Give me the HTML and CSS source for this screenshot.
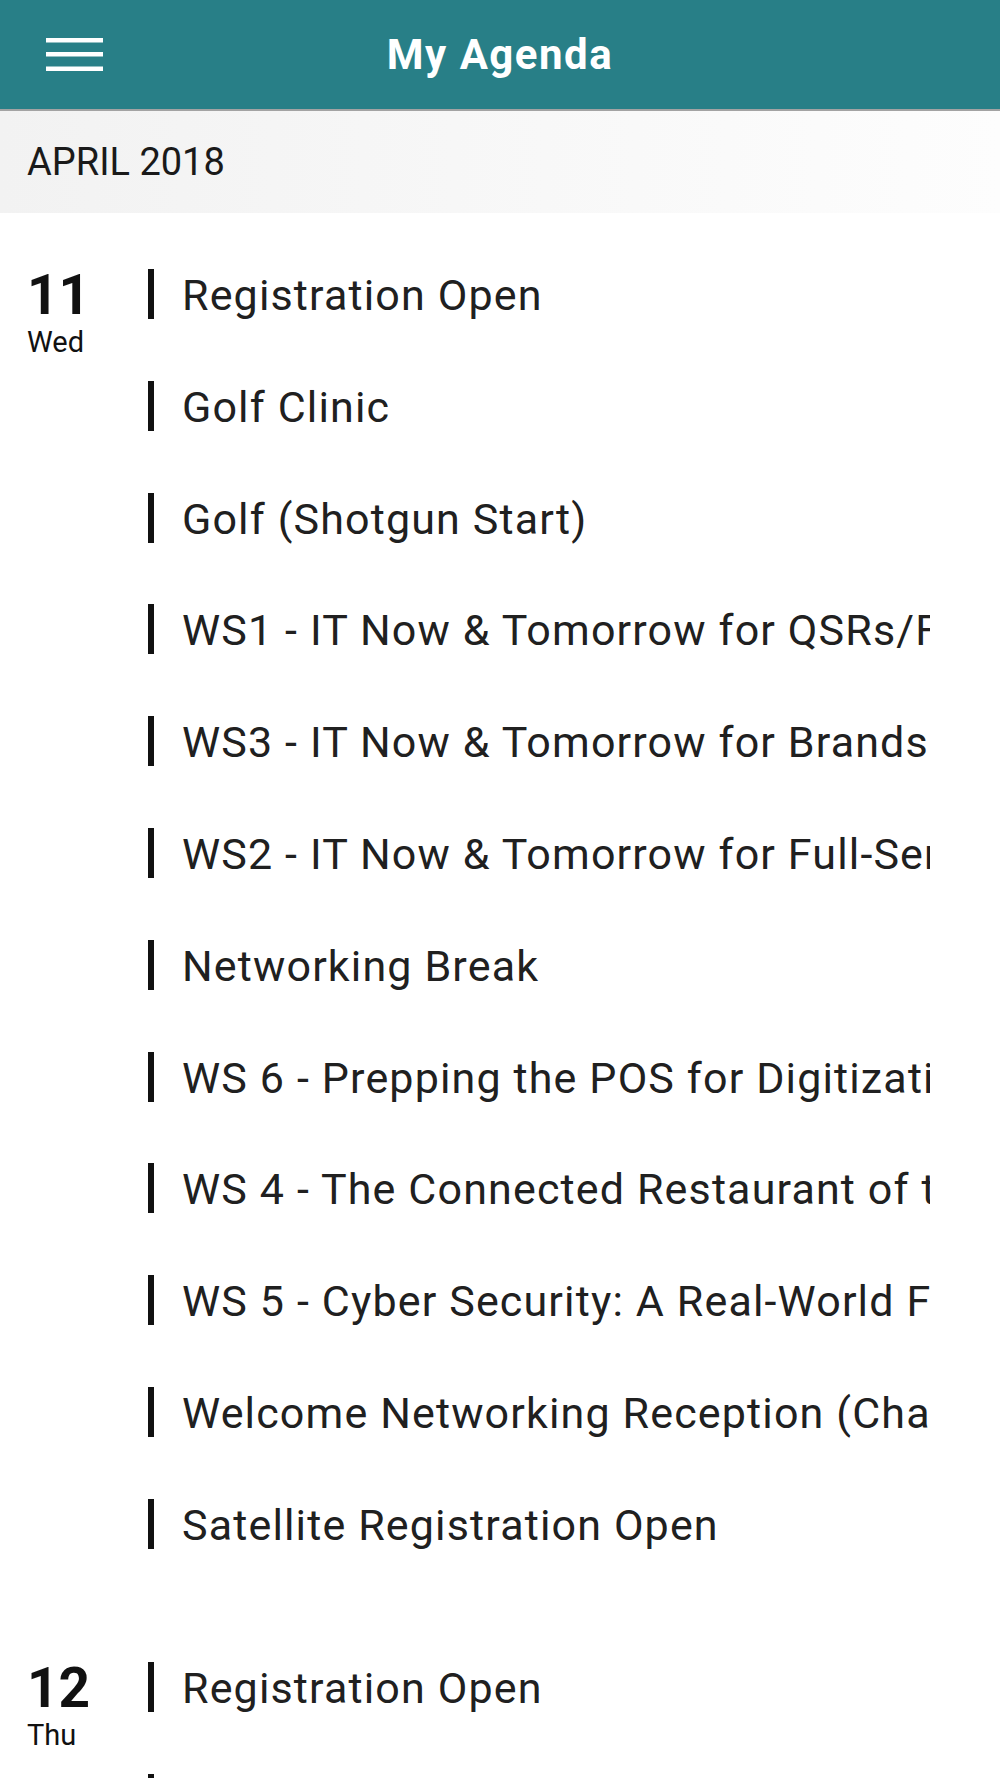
FILE: index.html
```html
<!DOCTYPE html>
<html lang="en">
<head>
    <meta charset="UTF-8">
    <meta name="viewport" content="width=device-width, initial-scale=1.0">
    <title>My Agenda</title>

    <link rel="stylesheet" href="styles.css">
</head>
<body>
    <header class="app-bar">
        <button class="menu-btn" aria-label="Menu">
            <svg width="57" height="33" viewBox="0 0 57 33">
                <rect x="0" y="0" width="57" height="4.5" fill="#fff"/>
                <rect x="0" y="14" width="57" height="4.5" fill="#fff"/>
                <rect x="0" y="28.5" width="57" height="4.5" fill="#fff"/>
            </svg>
        </button>
        <h1 class="app-title">My Agenda</h1>
        <span></span>
    </header>

    <div class="month-band">APRIL 2018</div>

    <main class="agenda">
        <section class="day">
            <div class="day-date">
                <span class="day-num">11</span>
                <span class="day-name">Wed</span>
            </div>
            <ul class="sessions">
                <li class="session">Registration Open</li>
                <li class="session">Golf Clinic</li>
                <li class="session">Golf (Shotgun Start)</li>
                <li class="session">WS1 - IT Now &amp; Tomorrow for QSRs/Fast Casual</li>
                <li class="session">WS3 - IT Now &amp; Tomorrow for Brands with Franchisees</li>
                <li class="session">WS2 - IT Now &amp; Tomorrow for Full-Service Restaurants</li>
                <li class="session">Networking Break</li>
                <li class="session">WS 6 - Prepping the POS for Digitization</li>
                <li class="session">WS 4 - The Connected Restaurant of the Future</li>
                <li class="session">WS 5 - Cyber Security: A Real-World Framework</li>
                <li class="session">Welcome Networking Reception (Champions Room)</li>
                <li class="session">Satellite Registration Open</li>
            </ul>
        </section>

        <section class="day">
            <div class="day-date">
                <span class="day-num">12</span>
                <span class="day-name">Thu</span>
            </div>
            <ul class="sessions">
                <li class="session">Registration Open</li>
                <li class="session">Networking Breakfast</li>
            </ul>
        </section>
    </main>
</body>
</html>
```

FILE: styles.css
```css
* {
    box-sizing: border-box;
}

body {
    margin: 0;
    background-color: #fff;
    font-family: Roboto, 'Liberation Sans', sans-serif;
    color: #1c1c1c;
}

.app-bar {
    display: grid;
    grid-template-columns: 1fr auto 1fr;
    align-items: center;
    height: 111px;
    padding: 0 46px;
    background-color: #287f87;
    border-bottom: 2px solid #a3a3a3;
}

.menu-btn {
    display: block;
    width: 57px;
    height: 33px;
    padding: 0;
    border: none;
    background: none;
}

.menu-btn svg {
    display: block;
}

.app-title {
    margin: 0;
    font-size: 42px;
    font-weight: 700;
    letter-spacing: 1.5px;
    color: #fff;
}

.month-band {
    display: flex;
    align-items: center;
    height: 102px;
    padding-left: 27px;
    background: linear-gradient(to right, #f2f2f2, #fdfdfd);
    font-size: 38px;
    color: #1a1a1a;
}

.agenda {
    display: flex;
    flex-direction: column;
    gap: 113px;
    padding-top: 56px;
}

.day {
    display: grid;
    grid-template-columns: 148px 1fr;
    padding-right: 70px;
}

.day-date {
    display: flex;
    flex-direction: column;
    padding-left: 27px;
    color: #111;
}

.day-num {
    margin-top: -1px;
    font-size: 55px;
    font-weight: 700;
    line-height: 1;
}

.day-name {
    margin-top: 5px;
    font-size: 29px;
    line-height: 1;
}

.sessions {
    display: flex;
    flex-direction: column;
    gap: 61.8px;
    margin: 0;
    padding: 0;
    list-style: none;
    min-width: 0;
}

.session {
    height: 50px;
    padding-left: 28px;
    border-left: 6px solid #111;
    font-size: 43px;
    line-height: 53px;
    letter-spacing: 1.15px;
    white-space: nowrap;
    overflow-x: clip;
    color: #202020;
}
```
